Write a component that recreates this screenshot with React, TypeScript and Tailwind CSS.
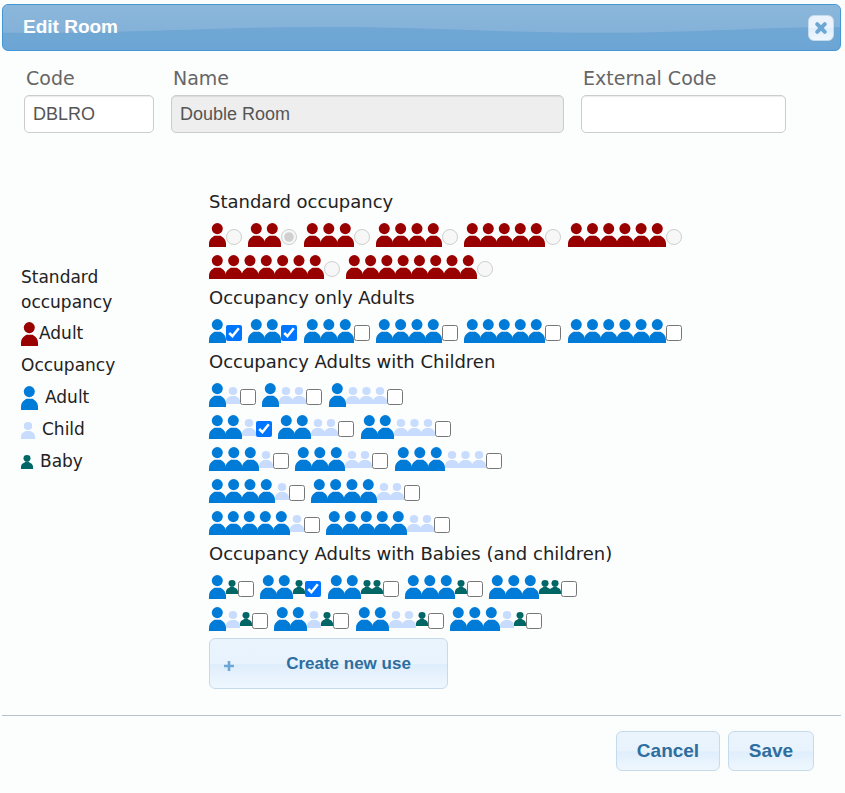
import React from "react";

type Kind = "adult" | "child" | "baby";

const shapes: Record<Kind, { widths: number[]; height: number; box: string; head: number[]; body: string }> = {
  adult: {
    widths: [0, 17, 33, 50, 66, 81, 98, 115, 131],
    height: 24,
    box: "mb-0",
    head: [8.3, 5.6, 5.5, 5.6],
    body: "M0 24V20.4C0.2 17.4 1.6 15.4 4 13.8L5.4 12.8H11.6L13 13.8C15.4 15.4 16.8 17.4 17 20.4V24Z",
  },
  child: {
    widths: [0, 14, 27, 41],
    height: 17,
    box: "mb-[3px]",
    head: [7, 4, 4.2, 4],
    body: "M0 17V14.4C0.2 12.2 1.4 10.8 3.4 9.8L4.6 9.1H9.4L10.6 9.8C12.6 10.8 13.8 12.2 14 14.4V17Z",
  },
  baby: {
    widths: [0, 12, 22],
    height: 14,
    box: "mb-[5px]",
    head: [6, 3.3, 3.5, 3.3],
    body: "M0 14V11.6C0.2 9.6 1.4 8.4 3.6 7.6L4.6 6.2H7.4L8.4 7.6C10.6 8.4 11.8 9.6 12 11.6V14Z",
  },
};

function People({ kind, count, color }: { kind: Kind; count: number; color: string }) {
  const { widths, height, box, head, body } = shapes[kind];
  const single = widths[1];
  const width = widths[count];
  const step = count > 1 ? (width - single) / (count - 1) : 0;
  return (
    <svg width={width} height={height} viewBox={`0 0 ${width} ${height}`} className={`block shrink-0 ${box} ${color}`} fill="currentColor" aria-hidden="true">
      {Array.from({ length: count }, (_, i) => (
        <g key={i} transform={`translate(${i * step} 0)`}>
          <ellipse cx={head[0]} cy={head[1]} rx={head[2]} ry={head[3]} />
          <path d={body} />
        </g>
      ))}
    </svg>
  );
}

const RED = "text-[#990000]";
const BLUE = "text-[#007bd8]";
const PALE = "text-[#c8dcff]";
const GREEN = "text-[#006666]";

type Group = { a: number; c?: number; b?: number; on?: boolean };

function Choice({ group, radio }: { group: Group; radio?: boolean }) {
  const { a, c = 0, b = 0, on } = group;
  const name = `${a} adults, ${c} children, ${b} babies`;
  return (
    <label className="inline-flex items-end pb-0.5 align-middle">
      <People kind="adult" count={a} color={radio ? RED : BLUE} />
      {c > 0 && <People kind="child" count={c} color={PALE} />}
      {b > 0 && <People kind="baby" count={b} color={GREEN} />}
      {radio ? (
        <input type="radio" name="standard" aria-label={name} disabled defaultChecked={on} className="m-0 mb-0.5 size-4 shrink-0" />
      ) : (
        <input type="checkbox" aria-label={name} defaultChecked={on} className="m-0 mb-0.5 size-4 shrink-0" />
      )}
    </label>
  );
}

function ChoiceRow({ groups, radio }: { groups: Group[]; radio?: boolean }) {
  return (
    <div className="text-xl leading-8">
      {groups.map((g, i) => (
        <React.Fragment key={i}>
          <Choice group={g} radio={radio} />{" "}
        </React.Fragment>
      ))}
    </div>
  );
}

function Section({ title, rows, radio }: { title: string; rows: Group[][]; radio?: boolean }) {
  return (
    <section>
      <h2 className="text-lg leading-8">{title}</h2>
      {rows.map((r, i) => (
        <ChoiceRow key={i} groups={r} radio={radio} />
      ))}
    </section>
  );
}

const standard: Group[][] = [[{ a: 1 }, { a: 2, on: true }, { a: 3 }, { a: 4 }, { a: 5 }, { a: 6 }, { a: 7 }, { a: 8 }]];
const adults: Group[][] = [[{ a: 1, on: true }, { a: 2, on: true }, { a: 3 }, { a: 4 }, { a: 5 }, { a: 6 }]];
const withChildren: Group[][] = [
  [{ a: 1, c: 1 }, { a: 1, c: 2 }, { a: 1, c: 3 }],
  [{ a: 2, c: 1, on: true }, { a: 2, c: 2 }, { a: 2, c: 3 }],
  [{ a: 3, c: 1 }, { a: 3, c: 2 }, { a: 3, c: 3 }],
  [{ a: 4, c: 1 }, { a: 4, c: 2 }],
  [{ a: 5, c: 1 }, { a: 5, c: 2 }],
];
const withBabies: Group[][] = [
  [{ a: 1, b: 1 }, { a: 2, b: 1, on: true }, { a: 2, b: 2 }, { a: 3, b: 1 }, { a: 3, b: 2 }],
  [{ a: 1, c: 1, b: 1 }, { a: 2, c: 1, b: 1 }, { a: 2, c: 2, b: 1 }, { a: 3, c: 1, b: 1 }],
];

const buttonLook =
  "rounded-md border border-[#c5dbec] bg-[linear-gradient(#ebf4fd_0%,#e8f3fd_50%,#dfeefc_52%,#eff7fe_100%)] font-['Liberation_Sans',Arial,sans-serif] font-bold text-[#2e6e9e]";
const fieldLook =
  "h-[38px] w-full rounded-[5px] border border-[#cccccc] px-2 font-['Liberation_Sans',Arial,sans-serif] text-lg text-[#555555] shadow-[inset_0_1px_1px_rgba(0,0,0,0.08)]";

function Field({ label, id, value, width, readOnly }: { label: string; id: string; value: string; width: string; readOnly?: boolean }) {
  return (
    <div className={width}>
      <label htmlFor={id} className="block pl-0.5 text-[19px] leading-7 text-[#666666]">
        {label}
      </label>
      <input id={id} type="text" defaultValue={value} readOnly={readOnly} className={`mt-[3px] ${fieldLook} ${readOnly ? "bg-[#eeeeee]" : "bg-white"}`} />
    </div>
  );
}

function LegendItem({ kind, color, label, gap }: { kind: Kind; color: string; label: string; gap: string }) {
  return (
    <div className={`flex h-8 items-end pb-[3px] leading-[26px] ${gap}`}>
      <People kind={kind} count={1} color={color} />
      <span>{label}</span>
    </div>
  );
}

export default function App() {
  return (
    <div className="min-h-screen bg-[#fcfdfd] pt-1 pr-1 pl-0.5 font-['DejaVu_Sans',Verdana,sans-serif] text-[#222222]">
      <header className="relative flex h-[47px] items-center justify-between overflow-hidden rounded-md border border-[#4297d7] bg-[linear-gradient(#74a9d2,#6ca5d5)] pr-1.5 pl-5">
        <svg className="absolute inset-0 size-full" viewBox="0 0 840 47" preserveAspectRatio="none" aria-hidden="true">
          <defs>
            <linearGradient id="gloss" x1="0" y1="0" x2="0" y2="1">
              <stop offset="0" stopColor="#8bb7db" />
              <stop offset="1" stopColor="#84b1d8" />
            </linearGradient>
          </defs>
          <path d="M0 0H840V23C760 23 710 28 620 29C500 30 430 22 310 23C210 23 120 30 0 29Z" fill="url(#gloss)" />
        </svg>
        <h1 className="relative font-['Liberation_Sans',Arial,sans-serif] text-[19px] font-bold text-white">Edit Room</h1>
        <button type="button" aria-label="Close" className="relative grid size-[26px] place-items-center rounded-md border border-[#c5dbec] bg-[linear-gradient(#ebf4fd_50%,#dfeefc_52%,#eff7fe)]">
          <svg width="14" height="14" viewBox="0 0 14 14" stroke="#6da8d5" strokeWidth="4" strokeLinecap="round" aria-hidden="true">
            <path d="M3.2 3.2L10.8 10.8M10.8 3.2L3.2 10.8" />
          </svg>
        </button>
      </header>

      <main className="pr-7">
        <div className="flex gap-[17px] pt-[13px] pr-[27px] pl-[22px]">
          <Field label="Code" id="code" value="DBLRO" width="w-[130px] shrink-0" />
          <Field label="Name" id="name" value="Double Room" width="min-w-0 flex-1" readOnly />
          <Field label="External Code" id="external" value="" width="w-[205px] shrink-0" />
        </div>

        <div className="flex pt-[53px]">
          <aside className="w-[207px] shrink-0 pt-[79px] pl-[19px] text-[17px] leading-8">
            <h2 className="mb-0.5 w-28 leading-[25px]">Standard occupancy</h2>
            <LegendItem kind="adult" color={RED} label="Adult" gap="gap-px" />
            <h2>Occupancy</h2>
            <LegendItem kind="adult" color={BLUE} label="Adult" gap="gap-[7px]" />
            <LegendItem kind="child" color={PALE} label="Child" gap="gap-[7px]" />
            <LegendItem kind="baby" color={GREEN} label="Baby" gap="gap-[7px]" />
          </aside>

          <div className="min-w-0 flex-1">
            <Section title="Standard occupancy" rows={standard} radio />
            <Section title="Occupancy only Adults" rows={adults} />
            <Section title="Occupancy Adults with Children" rows={withChildren} />
            <Section title="Occupancy Adults with Babies (and children)" rows={withBabies} />
            <button type="button" className={`mt-1 flex h-[51px] w-[239px] items-center pl-3.5 text-[17px] ${buttonLook}`}>
              <svg width="10" height="10" viewBox="0 0 10 10" stroke="#6da8d5" strokeWidth="2.6" className="mt-1" aria-hidden="true">
                <path d="M5 0V10M0 5H10" />
              </svg>
              <span className="flex-1 pr-2 pl-6">Create new use</span>
            </button>
          </div>
        </div>
      </main>

      <footer className="mt-[26px] flex justify-end gap-2 border-t border-[#b8c4cc] pt-[15px] pr-[27px]">
        <button type="button" className={`h-10 w-[104px] text-[19px] ${buttonLook}`}>Cancel</button>
        <button type="button" className={`h-10 w-[86px] text-[19px] ${buttonLook}`}>Save</button>
      </footer>
    </div>
  );
}
